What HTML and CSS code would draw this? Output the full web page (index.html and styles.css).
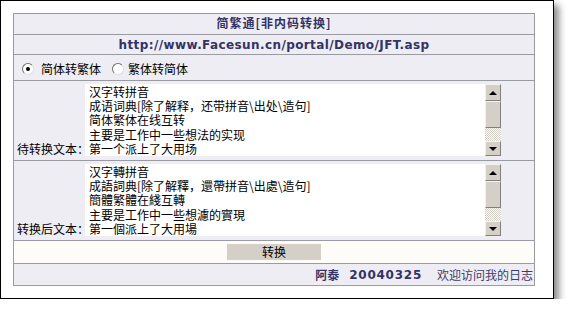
FILE: index.html
```html
<!DOCTYPE html>
<html lang="zh">
<head>
<meta charset="utf-8">
<title>简繁通</title>
<link rel="stylesheet" href="styles.css">
</head>
<body>
<div class="frame">
  <div class="tbl">
    <div class="row r-title">简繁通[非内码转换]</div>
    <div class="row r-url">http://www.Facesun.cn/portal/Demo/JFT.asp</div>
    <div class="row r-radio">
      <span class="radio checked"></span><span class="rlabel">简体转繁体</span>
      <span class="radio second"></span><span class="rlabel">繁体转简体</span>
    </div>
    <div class="row r-ta">
      <div class="label">待转换文本：</div>
      <div class="ta">
        <div class="ta-text">汉字转拼音<br>成语词典[除了解释，还带拼音\出处\造句]<br>简体繁体在线互转<br>主要是工作中一些想法的实现<br>第一个派上了大用场</div>
        <div class="sb">
          <div class="sb-btn up"><span class="tri-up"></span></div>
          <div class="sb-thumb"></div>
          <div class="sb-track"></div>
          <div class="sb-btn down"><span class="tri-down"></span></div>
        </div>
      </div>
    </div>
    <div class="row r-ta">
      <div class="label">转换后文本：</div>
      <div class="ta">
        <div class="ta-text">汉字轉拼音<br>成語詞典[除了解釋，還帶拼音\出處\造句]<br>簡體繁體在綫互轉<br>主要是工作中一些想濾的實現<br>第一個派上了大用場</div>
        <div class="sb">
          <div class="sb-btn up"><span class="tri-up"></span></div>
          <div class="sb-thumb"></div>
          <div class="sb-track"></div>
          <div class="sb-btn down"><span class="tri-down"></span></div>
        </div>
      </div>
    </div>
    <div class="row r-btn"><button class="btn">转换</button></div>
    <div class="row r-foot">
      <span class="author">阿泰</span><span class="date">20040325</span><span class="welcome">欢迎访问我的日志</span>
    </div>
  </div>
</div>
</body>
</html>
```

FILE: styles.css
```css
html, body {
  margin: 0;
  padding: 0;
  background: #fff;
}
body {
  font-family: "Noto Sans CJK SC", "Noto Sans", sans-serif;
  font-size: 12px;
  color: #000;
}
.frame {
  box-sizing: border-box;
  width: 554px;
  height: 299px;
  border: 1px solid #000;
  background: #fff;
  padding: 12px 18px 12px 12px;
  box-shadow: 5px 5px 7px rgba(0, 0, 0, 0.45);
}
.tbl {
  border: 1px solid #9a9aa4;
  background: #eeedf3;
}
.row {
  border-top: 1px solid #9a9aa4;
  box-sizing: border-box;
}
.row:first-child {
  border-top: none;
}
.r-title {
  height: 20px;
  line-height: 18px;
  text-align: center;
  font-weight: bold;
  color: #333366;
  letter-spacing: 1px;
}
.r-url {
  height: 20px;
  line-height: 20px;
  text-align: center;
  font-family: "DejaVu Sans", Verdana, sans-serif;
  font-weight: bold;
  font-size: 12px;
  letter-spacing: 0.4px;
  color: #333366;
}
.r-radio {
  height: 26px;
  display: flex;
  align-items: center;
  padding: 2px 0 0 8px;
}
.radio {
  box-sizing: border-box;
  width: 12px;
  height: 12px;
  border-radius: 50%;
  background: #fff;
  border: 1px solid;
  border-color: #707070 #e0e0e0 #e0e0e0 #707070;
  display: flex;
  align-items: center;
  justify-content: center;
  margin-right: 7px;
}
.radio.checked::after {
  content: "";
  width: 4px;
  height: 4px;
  border-radius: 50%;
  background: #000;
}
.radio.second {
  margin-left: 11px;
  margin-right: 4px;
}
.rlabel {
  line-height: 14px;
}
.r-ta {
  height: 80px;
  display: flex;
  align-items: flex-start;
}
.label {
  width: 68px;
  padding-left: 3px;
  padding-top: 60.8px;
  line-height: 14.2px;
  white-space: nowrap;
}
.ta {
  margin-top: 3px;
  width: 416px;
  height: 72px;
  background: #fff;
  display: flex;
}
.ta-text {
  flex: 1;
  overflow: hidden;
  padding: 1px 0 0 4px;
  line-height: 14.2px;
  white-space: nowrap;
}
.sb {
  width: 16px;
  display: flex;
  flex-direction: column;
}
.sb-btn, .sb-thumb {
  box-sizing: border-box;
  background: #d4d0c8;
  border: 1px solid;
  border-color: #f4f2ee #808080 #808080 #f4f2ee;
  display: flex;
  align-items: center;
  justify-content: center;
}
.sb-btn.up { height: 17px; }
.sb-thumb { height: 27px; }
.sb-track {
  height: 13px;
  background-color: #fff;
  background-image: repeating-conic-gradient(#d4d0c8 0 25%, #fff 0 50%);
  background-size: 2px 2px;
}
.sb-btn.down { height: 15px; }
.tri-up {
  width: 0;
  height: 0;
  border-left: 4px solid transparent;
  border-right: 4px solid transparent;
  border-bottom: 4px solid #000;
}
.tri-down {
  width: 0;
  height: 0;
  border-left: 4px solid transparent;
  border-right: 4px solid transparent;
  border-top: 4px solid #000;
}
.r-btn {
  height: 23px;
  background: #fdfcf9;
  display: flex;
  justify-content: center;
  align-items: flex-start;
}
.btn {
  margin-top: 3px;
  width: 94px;
  height: 16px;
  padding: 0;
  border: none;
  background: #d4d0c8;
  font-family: "Noto Sans CJK SC", sans-serif;
  font-size: 12px;
  line-height: 16px;
  color: #000;
}
.r-foot {
  height: 22px;
  display: flex;
  justify-content: flex-end;
  align-items: center;
  padding-right: 1px;
  color: #333366;
}
.author {
  font-weight: bold;
  margin-right: 10px;
}
.date {
  font-family: "DejaVu Sans", Verdana, sans-serif;
  font-weight: bold;
  font-size: 12px;
  letter-spacing: 0.75px;
  margin-right: 15px;
}
.welcome {
  color: #3c3c6c;
}
```
